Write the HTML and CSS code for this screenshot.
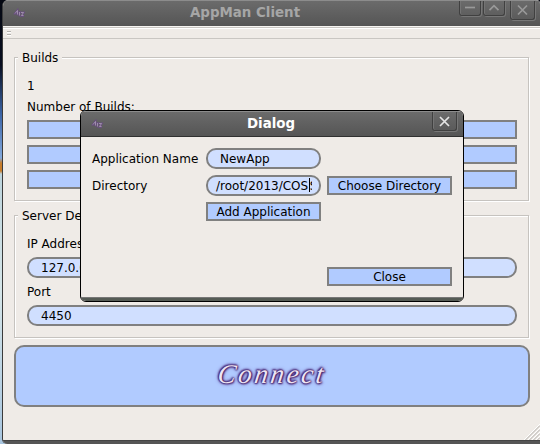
FILE: index.html
```html
<!DOCTYPE html>
<html lang="en">
<head>
<meta charset="utf-8">
<title>AppMan Client</title>
<link rel="stylesheet" href="styles.css">
</head>
<body>
<svg class="defs" aria-hidden="true"><symbol id="logo" viewBox="0 0 12 10"><path d="M1 6.500L4.500 2v5.500M1.500 5.500H5M6.500 3v5.500M5.500 4.500H11L8.500 8H11" fill="none" stroke="#67507c" stroke-width="1.800"/><path d="M2 5.500L4.500 2.500v4M6.500 4v3.500M8 4.500h2.500L8.500 7.500h2" fill="none" stroke="#b5a5be" stroke-width=".7"/></symbol></svg>
<main class="window">
  <header class="titlebar">
    <svg class="logo"><use href="#logo" width="12" height="10"/></svg>
    <h1 class="title">AppMan Client</h1>
    <div class="controls">
      <span class="control"><svg width="20" height="14"><path d="M5 6.500h10"/></svg></span>
      <span class="control"><svg width="20" height="14"><path d="M5.500 9.200l4.500-4.500 4.500 4.500"/></svg></span>
      <span class="control big"><svg width="23" height="19"><path d="M7 4.500l9 9M16 4.500l-9 9"/></svg></span>
    </div>
  </header>
  <div class="toolbar"><span class="grip"></span></div>
  <div class="content">
    <section class="group builds">
      <h2 class="legend">Builds</h2>
      <p class="label count">1</p>
      <p class="label">Number of Builds:</p>
      <div class="buttons"><div class="button"></div><div class="button"></div><div class="button"></div></div>
    </section>
    <section class="group server">
      <h2 class="legend">Server Details</h2>
      <p class="label">IP Address</p>
      <div class="field">127.0.0.1</div>
      <p class="label port">Port</p>
      <div class="field">4450</div>
    </section>
    <div class="connect"><span class="script">Connect</span></div>
  </div>
  <footer class="frame-bottom"></footer>
  <svg class="resize" width="16" height="16"><path d="M0 16L16 0M4 16L16 4M8 16L16 8M12 16L16 12" stroke="#fff"/><path d="M1.500 16L16 1.500M5.500 16L16 5.500M9.500 16L16 9.500M13.500 16L16 13.500" stroke="#b5b2ae"/></svg>
</main>
<section class="dialog">
  <header class="dialog-bar">
    <svg class="logo"><use href="#logo" width="12" height="10"/></svg>
    <h2 class="title">Dialog</h2>
    <span class="control big"><svg width="23" height="19"><path d="M7 5l9 9M16 5l-9 9"/></svg></span>
  </header>
  <div class="form">
    <span class="label">Application Name</span>
    <div class="field">NewApp</div>
    <span></span>
    <span class="label">Directory</span>
    <div class="field path"><span class="path-text">/root/2013/COS</span><span class="caret"></span><span class="clip">S</span></div>
    <div class="button">Choose Directory</div>
    <span></span>
    <div class="button">Add Application</div>
    <span></span>
    <div class="button close">Close</div>
  </div>
  <footer class="dialog-bottom"></footer>
</section>
</body>
</html>
```
FILE: styles.css
```css
* { box-sizing: border-box; }
body {
  margin: 0;
  width: 540px;
  height: 444px;
  overflow: hidden;
  position: relative;
  padding-left: 2px;
  background: linear-gradient(#050812 0, #080e20 65px, #3d66a8 115px, #83a9dc 158px, #c77d2b 163px, #c77d2b 171px, #bdd4dc 174px, #d5e5e8 290px, #a8c5df 444px);
  font: 12px/15px "DejaVu Sans", sans-serif;
  color: #000;
}
h1, h2, p { margin: 0; font-size: inherit; font-weight: normal; }
.defs { position: absolute; width: 0; height: 0; }
.window {
  position: relative;
  height: 444px;
  display: flex;
  flex-direction: column;
  background: #efebe7;
  border-left: 1px solid #3b3b3b;
  border-radius: 6px 4px 0 5px;
  overflow: hidden;
}
.titlebar {
  height: 26px;
  display: grid;
  grid-template-columns: 28px 1fr 81px;
  background: linear-gradient(#6b6b6b, #555);
  border-top: 1px solid #8c8c8c;
  color: #a6a6a6;
  stroke: #999;
}
.logo { width: 12px; height: 10px; margin: 7px 0 0 10px; }
.title {
  font-weight: bold;
  font-size: 13.400px;
  line-height: 24px;
  text-align: center;
  white-space: nowrap;
  stroke: none;
}
.controls { display: flex; gap: 2px; }
.control {
  width: 22px;
  height: 15px;
  border: 1px solid #404040;
  border-top: 0;
  border-radius: 0 0 3px 3px;
  box-shadow: 1px 1px 0 #777, inset 1px 0 0 #747474;
}
.control.big { width: 25px; height: 19px; }
.controls .big { margin-left: 3px; }
.control svg { display: block; fill: none; stroke-width: 1.700; }
.toolbar {
  height: 13px;
  border-top: 1px solid #f7f5f2;
  border-bottom: 1px solid #c9c6c2;
  box-shadow: inset 0 1px 0 #c9c6c2, inset 0 2px 0 #fff;
  padding: 4px 0 0 4px;
}
.grip { display: block; width: 4px; height: 4px; border-top: 1px solid #b4b1ad; border-bottom: 1px solid #b4b1ad; box-shadow: 0 1px 0 #fff, inset 0 1px 0 #fff; }
.content { flex: 1; padding: 18px 10px 0 11px; }
.group {
  width: 515px;
  border: 1px solid #c6c3bf;
  box-shadow: 1px 1px 0 #fff, inset 1px 1px 0 #fff;
  padding: 0 11px 0 12px;
}
.builds { height: 144px; }
.server { height: 123px; margin-top: 14px; }
.legend {
  width: max-content;
  margin: -7px 0 0 -9px;
  padding: 0 4px;
  background: #efebe7;
}
.label { white-space: nowrap; }
.builds .count { margin: 13px 0 6px; }
.buttons { display: grid; gap: 6px; margin-top: 5px; }
.button {
  height: 19px;
  border: 2px solid #808080;
  background: #b1cbff;
  text-align: center;
  white-space: nowrap;
  line-height: 17px;
}
.field {
  height: 21px;
  border: 2px solid #808080;
  border-radius: 10px;
  background: #d0dfff;
  padding: 1px 12px 0;
  line-height: 17px;
  white-space: nowrap;
  overflow: hidden;
}
.server .legend { margin-bottom: 13px; }
.server .label { margin-bottom: 5px; }
.server .port { padding-top: 1px; margin: 6px 0 5px; }
.connect {
  width: 516px;
  height: 62px;
  margin-top: 7px;
  border: 2px solid #808080;
  border-radius: 10px;
  background: #b1cbff;
  display: flex;
  align-items: center;
  justify-content: center;
}
.script {
  font: italic 27px/30px "Liberation Serif", serif;
  letter-spacing: 2.600px;
  margin-top: -5px;
  transform: skewX(-8deg);
  color: #eee5f3;
  text-shadow: 0 0 1px #43206c, 0 0 2px #43206c, 0 0 2px #43206c, 1px 1px 2px #4c2878, -1px -1px 2px #4c2878, 0 0 4px #5b3b93;
}
.frame-bottom { height: 4px; background: #555; border-top: 1px solid #444; }
.resize { position: absolute; right: 0; bottom: 4px; }
.dialog {
  position: absolute;
  left: 80px;
  top: 110px;
  width: 384px;
  height: 192px;
  display: flex;
  flex-direction: column;
  border: 1px solid #000;
  border-radius: 6px;
  background: #efebe7;
  overflow: hidden;
}
.dialog-bar {
  height: 26px;
  display: grid;
  grid-template-columns: 29px 1fr 31px;
  border-top: 1px solid #8c8c8c;
  border-bottom: 1px solid #303030;
  background: linear-gradient(#6b6b6b, #555);
  color: #fff;
  stroke: #e5e5e5;
}
.form {
  flex: 1;
  display: grid;
  grid-template-columns: 108px 115px 125px;
  grid-template-rows: 21px 21px 19px 19px;
  column-gap: 6px;
  row-gap: 6px;
  align-items: center;
  align-content: start;
  padding: 11px;
}
.form .label { line-height: 17px; padding-top: 1px; }
.form .close { grid-column: 3; margin-top: 80px; }
.path { display: flex; padding: 1px 8px 0; }
.caret { width: 1px; height: 14px; background: #000; flex: none; margin-left: .5px; }
.clip { width: 2px; overflow: hidden; flex: none; }
.dialog-bottom { height: 4px; background: #555b55; border-top: 1px solid #777; }
```
